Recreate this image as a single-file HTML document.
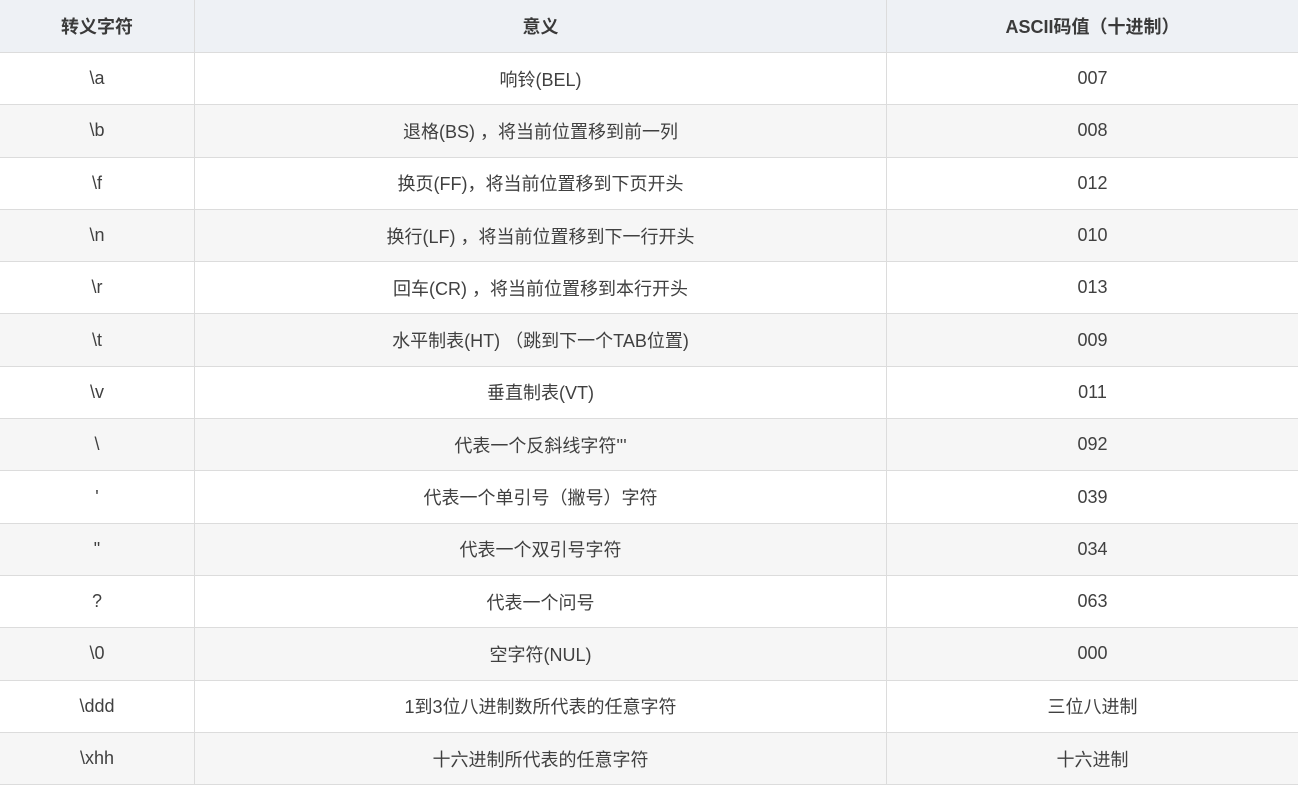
<!DOCTYPE html>
<html><head><meta charset="utf-8"><style>
html,body{margin:0;padding:0;background:#fff;width:1298px;height:786px;overflow:hidden}
table{border-collapse:collapse;position:absolute;left:-1px;top:-1px;width:1299px;table-layout:fixed;font-family:"Liberation Sans","Noto Sans CJK SC",sans-serif;font-size:18px;color:#404040}
td,th{border:1px solid #dcdcdc;text-align:center;padding:0;box-sizing:border-box}
tr{height:52.3px}
tr:first-child{height:53px}
th{background:#eef1f5;font-weight:bold;color:#3a3a3a}
tr:nth-child(odd) td{background:#f6f6f6}
</style></head><body>
<table>
<colgroup><col style="width:195px"><col style="width:692px"><col style="width:412px"></colgroup>
<tr><th>转义字符</th><th>意义</th><th>ASCII码值（十进制）</th></tr>
<tr><td>\a</td><td>响铃(BEL)</td><td>007</td></tr>
<tr><td>\b</td><td>退格(BS) ，将当前位置移到前一列</td><td>008</td></tr>
<tr><td>\f</td><td>换页(FF)，将当前位置移到下页开头</td><td>012</td></tr>
<tr><td>\n</td><td>换行(LF) ，将当前位置移到下一行开头</td><td>010</td></tr>
<tr><td>\r</td><td>回车(CR) ，将当前位置移到本行开头</td><td>013</td></tr>
<tr><td>\t</td><td>水平制表(HT) （跳到下一个TAB位置)</td><td>009</td></tr>
<tr><td>\v</td><td>垂直制表(VT)</td><td>011</td></tr>
<tr><td>\</td><td>代表一个反斜线字符'''</td><td>092</td></tr>
<tr><td>'</td><td>代表一个单引号（撇号）字符</td><td>039</td></tr>
<tr><td>"</td><td>代表一个双引号字符</td><td>034</td></tr>
<tr><td>?</td><td>代表一个问号</td><td>063</td></tr>
<tr><td>\0</td><td>空字符(NUL)</td><td>000</td></tr>
<tr><td>\ddd</td><td>1到3位八进制数所代表的任意字符</td><td>三位八进制</td></tr>
<tr><td>\xhh</td><td>十六进制所代表的任意字符</td><td>十六进制</td></tr>
</table>
</body></html>
